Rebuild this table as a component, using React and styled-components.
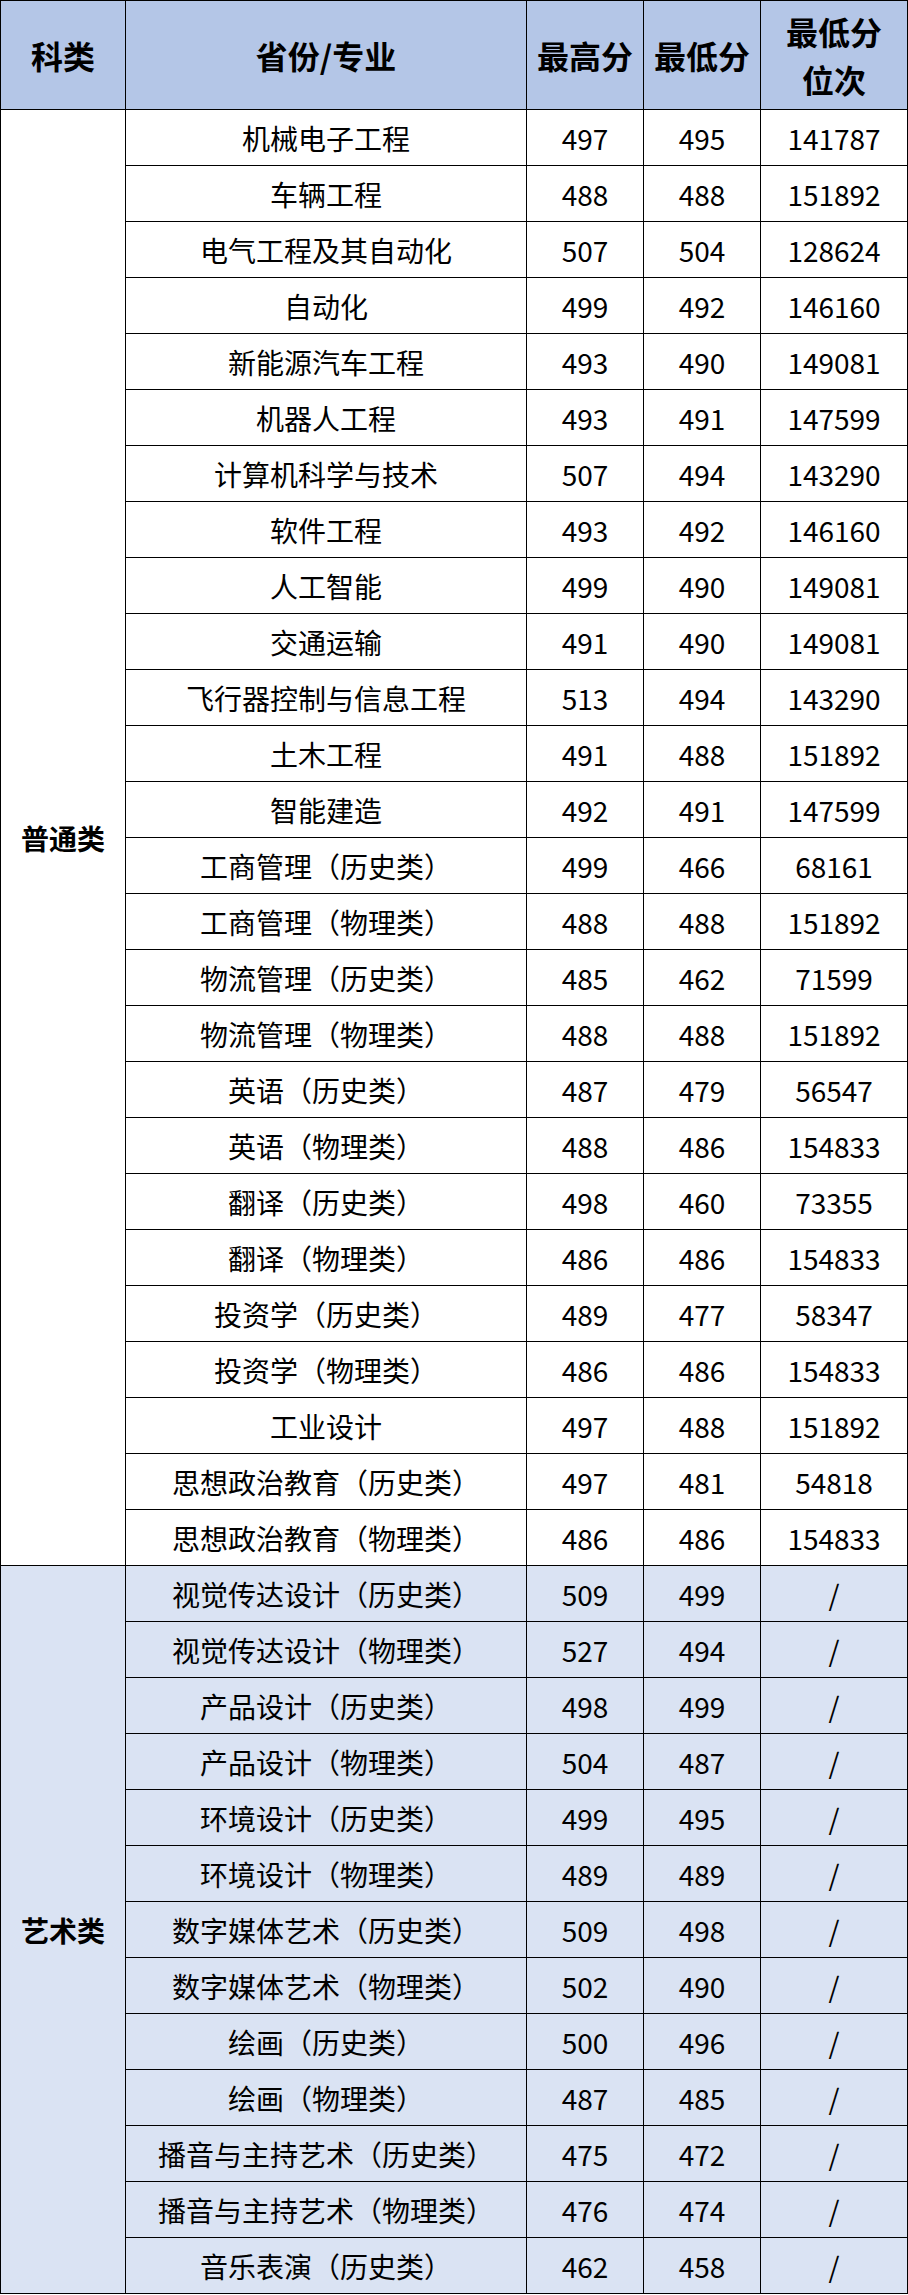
import React from 'react';
import styled, { createGlobalStyle } from 'styled-components';

const GlobalStyle = createGlobalStyle`
  html, body {
    margin: 0;
    padding: 0;
    background: #fff;
  }
  body {
    font-family: "Noto Sans CJK SC", "Noto Sans", sans-serif;
    color: #000;
  }
`;

const general = [
  ['机械电子工程', 497, 495, 141787],
  ['车辆工程', 488, 488, 151892],
  ['电气工程及其自动化', 507, 504, 128624],
  ['自动化', 499, 492, 146160],
  ['新能源汽车工程', 493, 490, 149081],
  ['机器人工程', 493, 491, 147599],
  ['计算机科学与技术', 507, 494, 143290],
  ['软件工程', 493, 492, 146160],
  ['人工智能', 499, 490, 149081],
  ['交通运输', 491, 490, 149081],
  ['飞行器控制与信息工程', 513, 494, 143290],
  ['土木工程', 491, 488, 151892],
  ['智能建造', 492, 491, 147599],
  ['工商管理（历史类）', 499, 466, 68161],
  ['工商管理（物理类）', 488, 488, 151892],
  ['物流管理（历史类）', 485, 462, 71599],
  ['物流管理（物理类）', 488, 488, 151892],
  ['英语（历史类）', 487, 479, 56547],
  ['英语（物理类）', 488, 486, 154833],
  ['翻译（历史类）', 498, 460, 73355],
  ['翻译（物理类）', 486, 486, 154833],
  ['投资学（历史类）', 489, 477, 58347],
  ['投资学（物理类）', 486, 486, 154833],
  ['工业设计', 497, 488, 151892],
  ['思想政治教育（历史类）', 497, 481, 54818],
  ['思想政治教育（物理类）', 486, 486, 154833],
];

const art = [
  ['视觉传达设计（历史类）', 509, 499, '/'],
  ['视觉传达设计（物理类）', 527, 494, '/'],
  ['产品设计（历史类）', 498, 499, '/'],
  ['产品设计（物理类）', 504, 487, '/'],
  ['环境设计（历史类）', 499, 495, '/'],
  ['环境设计（物理类）', 489, 489, '/'],
  ['数字媒体艺术（历史类）', 509, 498, '/'],
  ['数字媒体艺术（物理类）', 502, 490, '/'],
  ['绘画（历史类）', 500, 496, '/'],
  ['绘画（物理类）', 487, 485, '/'],
  ['播音与主持艺术（历史类）', 475, 472, '/'],
  ['播音与主持艺术（物理类）', 476, 474, '/'],
  ['音乐表演（历史类）', 462, 458, '/'],
];

const groups = [
  { name: '普通类', rows: general, tint: false },
  { name: '艺术类', rows: art, tint: true },
];

export default function App() {
  return (
    <>
      <GlobalStyle />
      <Table>
        <colgroup>
          <col style={{ width: 125 }} />
          <col style={{ width: 401 }} />
          <col style={{ width: 117 }} />
          <col style={{ width: 117 }} />
          <col style={{ width: 147 }} />
        </colgroup>
        <thead>
          <HeadRow>
            <Th>科类</Th>
            <Th>省份/专业</Th>
            <Th>最高分</Th>
            <Th>最低分</Th>
            <Th>最低分<br />位次</Th>
          </HeadRow>
        </thead>
        <tbody>
          {groups.map((g) =>
            g.rows.map((r, i) => (
              <Row key={g.name + i} $tint={g.tint}>
                {i === 0 && <Category rowSpan={g.rows.length}>{g.name}</Category>}
                <Td>{r[0]}</Td>
                <Td>{r[1]}</Td>
                <Td>{r[2]}</Td>
                <Td>{r[3]}</Td>
              </Row>
            ))
          )}
        </tbody>
      </Table>
    </>
  );
}

const Table = styled.table`
  width: 908px;
  table-layout: fixed;
  border-collapse: collapse;
  border: 1px solid #000;
`;

const HeadRow = styled.tr`
  height: 109px;
  background: #b4c6e7;
`;

const Th = styled.th`
  border: 1px solid #000;
  padding: 0;
  font-size: 32px;
  font-weight: 700;
  line-height: 48px;
  text-align: center;
  vertical-align: middle;
`;

const Row = styled.tr`
  height: 56px;
  background: ${(p) => (p.$tint ? '#dae3f3' : '#fff')};
`;

const Td = styled.td`
  border: 1px solid #000;
  padding: 0;
  font-size: 28px;
  line-height: 1;
  text-align: center;
  vertical-align: middle;
  white-space: nowrap;
`;

const Category = styled(Td)`
  font-weight: 700;
`;
